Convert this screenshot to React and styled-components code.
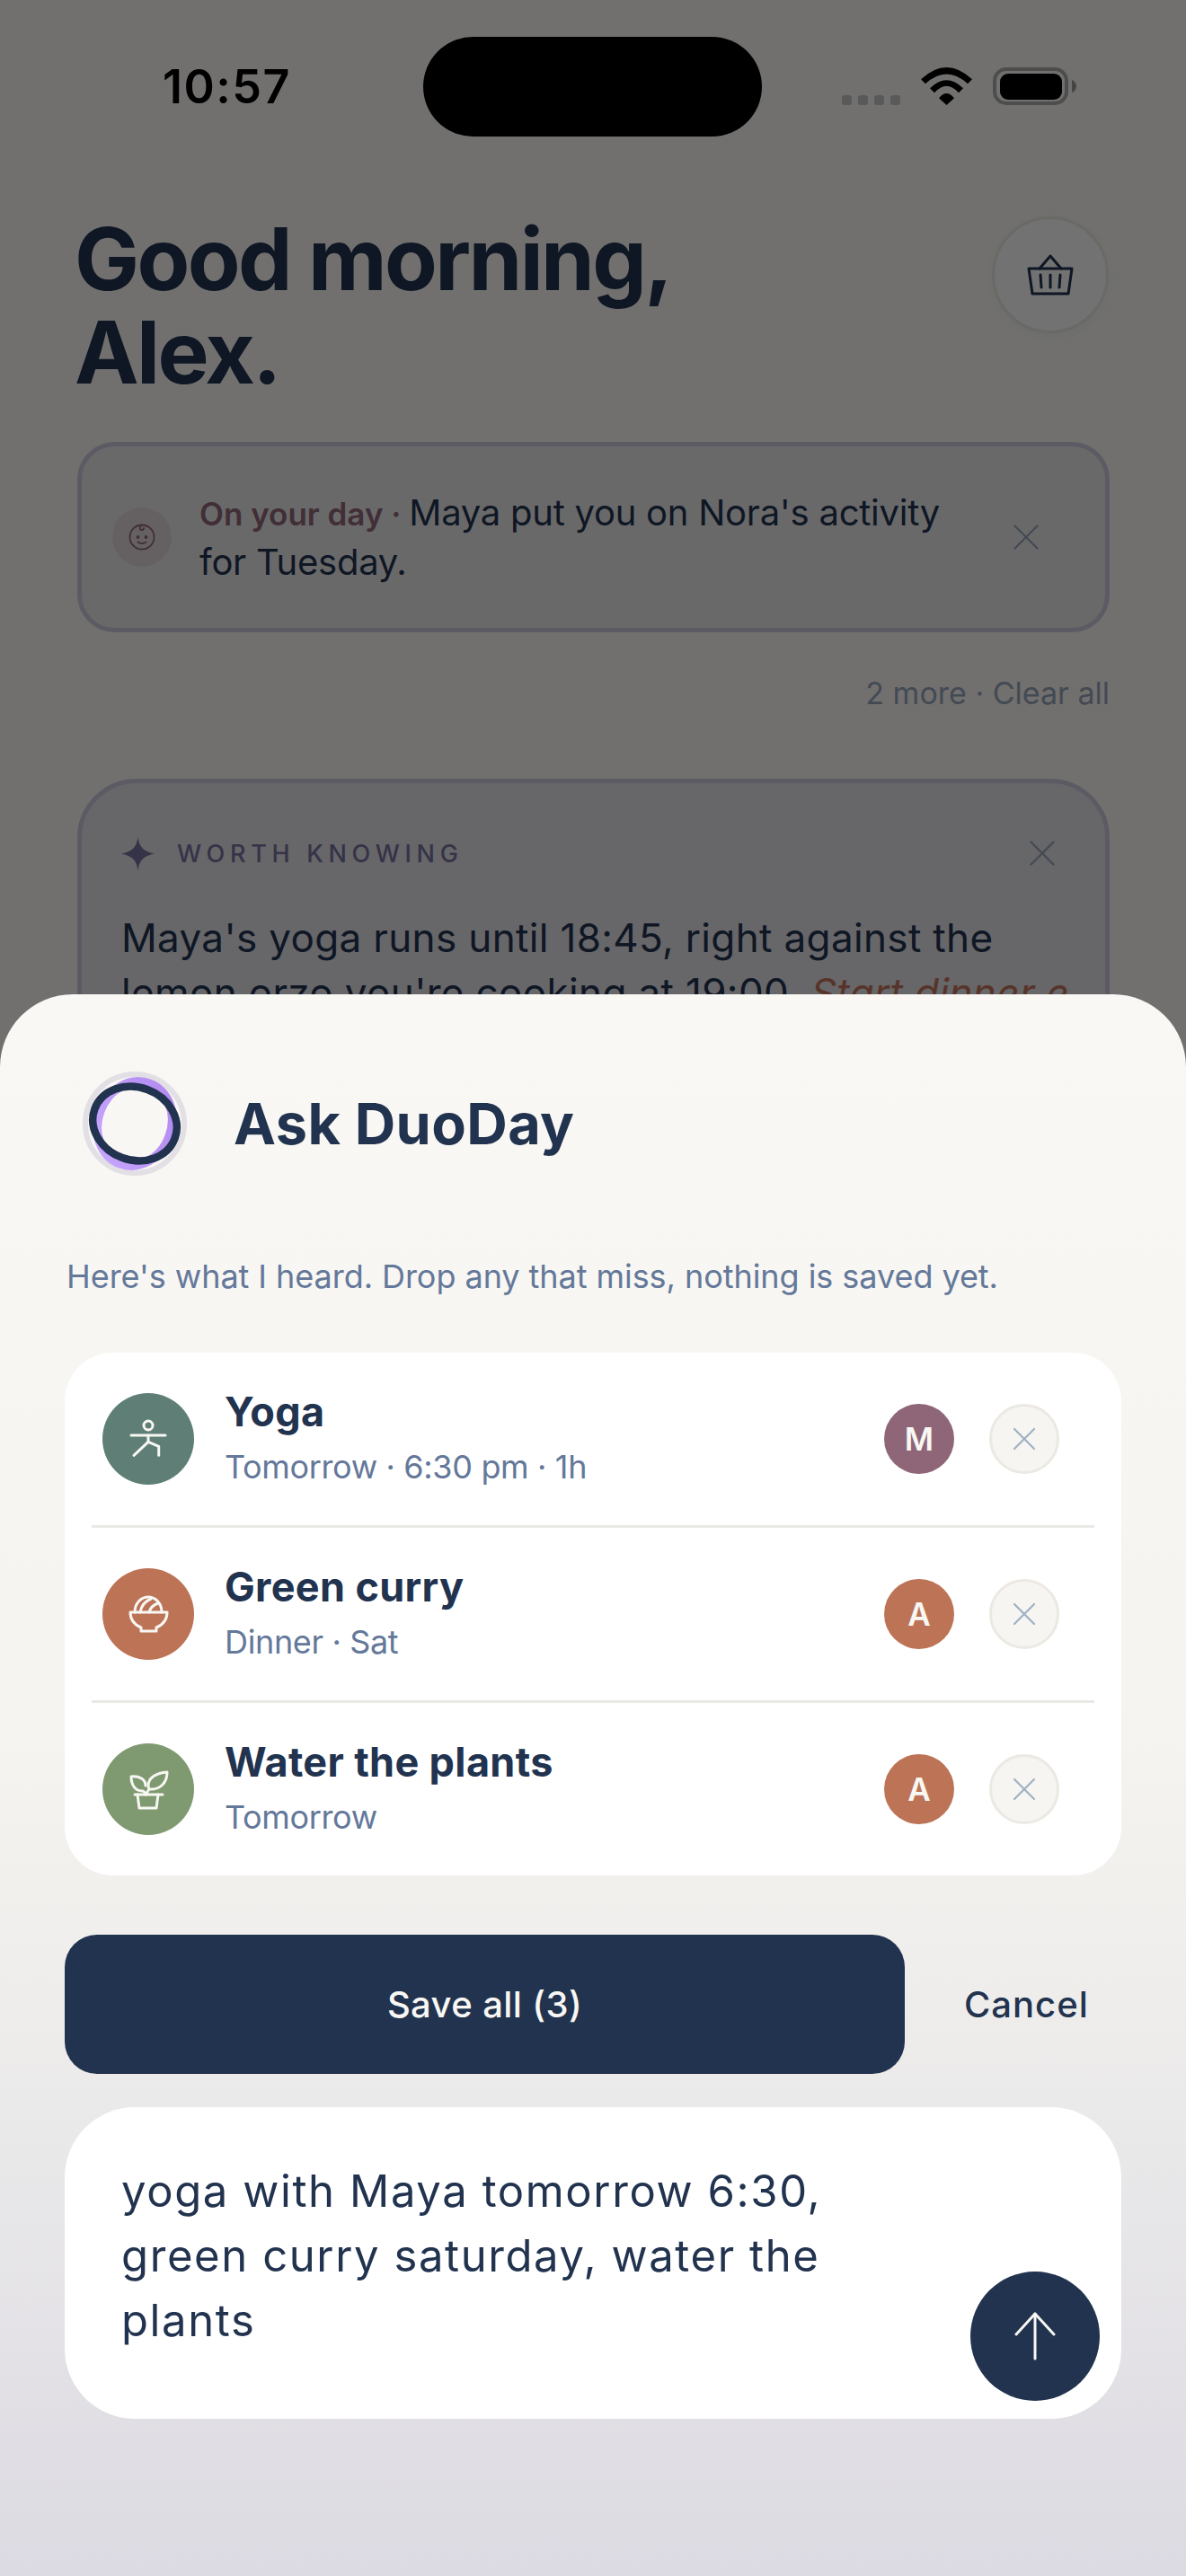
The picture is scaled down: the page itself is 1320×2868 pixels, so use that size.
import React from "react";
import styled, { createGlobalStyle } from "styled-components";
import { X } from "lucide-react";

const FONT = `Inter, "Liberation Sans", sans-serif`;
const NAVY = "#22334f";
const SLATE = "#64789a";
const MUTED = "#94a3b8";

const Global = createGlobalStyle`
  html, body { margin: 0; padding: 0; background: #f8f7f3; }
  * { box-sizing: border-box; }
`;

const Phone = styled.div`
  position: relative;
  width: 1320px;
  height: 2868px;
  overflow: hidden;
  background: #f8f7f3;
  font-family: ${FONT};
`;

const StatusBar = styled.div`
  display: flex;
  align-items: flex-start;
  height: 236px;
  padding-top: 41px;
`;

const Clock = styled.div`
  width: 139px;
  margin: 30px 0 0 181px;
  font-size: 52px;
  line-height: 52px;
  font-weight: 600;
  letter-spacing: 1.5px;
  color: #000;
  white-space: nowrap;
`;

const Island = styled.div`
  width: 377px;
  height: 111px;
  margin-left: 151px;
  border-radius: 56px;
  background: #000;
`;

const StatusIcons = styled.div`
  display: flex;
  align-items: flex-end;
  gap: 23px;
  height: 42px;
  margin: 34px 0 0 89px;
`;

const Dots = styled.div`
  display: flex;
  gap: 7px;
`;

const Dot = styled.span`
  width: 11px;
  height: 11px;
  border-radius: 3px;
  background: #c4c4c4;
`;

const Content = styled.div`
  padding: 0 85px 0 86px;
`;

const Hero = styled.div`
  display: flex;
  justify-content: space-between;
  align-items: flex-start;
`;

const Title = styled.h1`
  margin: 0 0 0 -3px;
  font-size: 96px;
  line-height: 104px;
  font-weight: 700;
  letter-spacing: -2.6px;
  color: ${NAVY};
`;

const Basket = styled.div`
  display: flex;
  align-items: center;
  justify-content: center;
  width: 130px;
  height: 130px;
  margin: 5px 1px 0 0;
  border-radius: 50%;
  border: 3px solid #e8e6e0;
  background: #fafafb;
  box-shadow: 0 3px 12px rgba(34, 51, 79, 0.05);
`;

const Notice = styled.div`
  display: flex;
  align-items: center;
  height: 212px;
  margin-top: 48px;
  padding-left: 34px;
  border: 5px solid #cbc9dc;
  border-radius: 42px;
  background: #e8e6e8;
`;

const NoticeIcon = styled.div`
  display: flex;
  flex: none;
  align-items: center;
  justify-content: center;
  width: 66px;
  height: 66px;
  border-radius: 50%;
  background: #ded6d8;
`;

const NoticeText = styled.div`
  width: 860px;
  margin-left: 31px;
  font-size: 40px;
  line-height: 53px;
  letter-spacing: -0.25px;
  color: ${NAVY};
`;

const Accent = styled.b`
  font-size: 35px;
  font-weight: 600;
  letter-spacing: 0;
  color: #8f6678;
`;

const Dismiss = styled.div`
  display: flex;
  flex: none;
  margin-left: ${(p) => p.$gap}px;
  color: ${MUTED};
`;

const More = styled.div`
  margin-top: 48px;
  text-align: right;
  font-size: 34px;
  line-height: 40px;
  color: ${MUTED};
`;

const Insight = styled.div`
  height: 460px;
  margin-top: 75px;
  padding: 58px 45px 0 44px;
  border: 5px solid #cbc9dc;
  border-radius: 66px;
  background: #e3e1e6;
`;

const InsightHead = styled.div`
  display: flex;
  align-items: center;
  height: 40px;
`;

const Eyebrow = styled.span`
  margin-left: 25px;
  flex: 1;
  font-size: 27px;
  font-weight: 500;
  letter-spacing: 5.7px;
  color: #75709f;
`;

const InsightText = styled.p`
  margin: 44px 0 0;
  font-size: 44px;
  line-height: 61px;
  letter-spacing: 0.35px;
  color: ${NAVY};
  white-space: nowrap;
`;

const Link = styled.em`
  color: #c0735a;
`;

const Scrim = styled.div`
  position: absolute;
  inset: 0;
  background: rgba(0, 0, 0, 0.545);
`;

const Sheet = styled.div`
  position: absolute;
  left: 0;
  right: 0;
  top: 1107px;
  bottom: 0;
  padding: 86px 72px 0;
  border-radius: 81px 81px 0 0;
  background: linear-gradient(180deg, #f9f8f4 0%, #f5f4f0 45%, #efeeec 62%, #dcdae2 100%);
`;

const SheetHead = styled.div`
  display: flex;
  align-items: center;
  padding-left: 20px;
  height: 115px;
`;

const SheetTitle = styled.h2`
  margin: 0 0 0 52px;
  font-size: 63px;
  line-height: 76px;
  font-weight: 700;
  letter-spacing: 0.4px;
  color: ${NAVY};
`;

const Lead = styled.p`
  margin: 91px 0 0 2px;
  font-size: 36px;
  line-height: 44px;
  letter-spacing: -0.05px;
  color: ${SLATE};
`;

const List = styled.div`
  margin-top: 63px;
  padding: 0 30px;
  border-radius: 54px;
  background: #fff;
`;

const Row = styled.div`
  display: flex;
  align-items: center;
  height: ${(p) => (p.$first ? "192px" : "195px")};
  padding: 0 39px 0 12px;
  border-top: ${(p) => (p.$first ? "none" : "3px solid #ebe9e3")};
`;

const RowIcon = styled.div`
  display: flex;
  flex: none;
  align-items: center;
  justify-content: center;
  width: 102px;
  height: 102px;
  border-radius: 50%;
  background: ${(p) => p.$bg};
`;

const RowBody = styled.div`
  flex: 1;
  margin-left: 34px;
  padding-bottom: 5px;
`;

const RowTitle = styled.div`
  font-size: 45px;
  line-height: 56px;
  font-weight: 700;
  letter-spacing: 0.35px;
  color: ${NAVY};
`;

const RowMeta = styled.div`
  margin-top: 11px;
  font-size: 36px;
  line-height: 44px;
  letter-spacing: -0.35px;
  color: ${SLATE};
`;

const Avatar = styled.div`
  display: flex;
  align-items: center;
  justify-content: center;
  width: 78px;
  height: 78px;
  border-radius: 50%;
  background: ${(p) => p.$bg};
  color: #f8f7f3;
  font-size: 35px;
  font-weight: 600;
`;

const Remove = styled.div`
  display: flex;
  align-items: center;
  justify-content: center;
  width: 78px;
  height: 78px;
  margin-left: 39px;
  border: 3px solid #ebe9e2;
  border-radius: 50%;
  background: #f6f5f1;
  color: #9fb0c4;
`;

const Actions = styled.div`
  display: flex;
  align-items: center;
  margin-top: 66px;
`;

const SaveButton = styled.div`
  display: flex;
  align-items: center;
  justify-content: center;
  width: 935px;
  height: 155px;
  border-radius: 36px;
  background: ${NAVY};
  color: #f8f7f3;
  font-size: 40px;
  font-weight: 500;
  letter-spacing: 0.4px;
`;

const CancelButton = styled.div`
  margin-left: 66px;
  font-size: 40px;
  font-weight: 500;
  letter-spacing: 1px;
  color: ${NAVY};
`;

const Composer = styled.div`
  position: relative;
  height: 347px;
  margin-top: 37px;
  padding: 58px 0 0 63px;
  border-radius: 78px;
  background: #fff;
`;

const ComposerText = styled.div`
  width: 800px;
  font-size: 49px;
  line-height: 72px;
  letter-spacing: 1.6px;
  color: ${NAVY};
`;

const Send = styled.div`
  position: absolute;
  right: 24px;
  bottom: 20px;
  display: flex;
  align-items: center;
  justify-content: center;
  width: 144px;
  height: 144px;
  border-radius: 50%;
  background: ${NAVY};
`;

const Wifi = () => (
  <svg width="57" height="42" viewBox="0 0 57 42" fill="#000">
    <path d="M0 13.300Q28.500-13.300 57 13.300L52 18.300Q28.500-3.100 5 18.300Z" />
    <path d="M10 23.300Q28.500 5.300 47 23.300L42 28.300Q28.500 13.100 15 28.300Z" />
    <path d="M20 34.300Q28.500 23.700 37 34.300L28.500 42Z" />
  </svg>
);

const Battery = () => (
  <svg width="93" height="42" viewBox="0 0 93 42">
    <rect x="2" y="2" width="80" height="38" rx="13" fill="none" stroke="#aaaaaa" strokeWidth="4" />
    <rect x="8" y="7" width="69" height="29" rx="9" fill="#000" />
    <path d="M88 14c3 1 5 4 5 7s-2 6-5 7z" fill="#999999" />
  </svg>
);

const BasketIcon = () => (
  <svg width="56" height="56" viewBox="0 0 56 56" fill="none" stroke={NAVY} strokeWidth="3" strokeLinecap="round" strokeLinejoin="round">
    <path d="M4 21h48l-4 28H8z" />
    <path d="M16 21 28 7l12 14" />
    <path d="M17 28l1 14" />
    <path d="M28 28v14" />
    <path d="M39 28l-1 14" />
  </svg>
);

const BabyFace = () => (
  <svg width="32" height="32" viewBox="0 0 32 32" fill="none" stroke="#8f6678" strokeWidth="1.800" strokeLinecap="round">
    <circle cx="16" cy="16" r="13.500" />
    <path d="M16 2.500c-3 2-3 5.500 0 5.500 1.500 0 2-1 2-2" />
    <path d="M11.500 21.500c2.500 2 6.500 2 9 0" />
    <circle cx="11.500" cy="16" r="1" fill="#8f6678" />
    <circle cx="20.500" cy="16" r="1" fill="#8f6678" />
  </svg>
);

const Sparkle = () => (
  <svg width="37" height="37" viewBox="0 0 37 37" fill="#75709f">
    <path d="M18.500 0c1.500 11 6 16 18.500 18.500C24.500 21 20 26 18.500 37 17 26 12.500 21 0 18.500 12.500 16 17 11 18.500 0z" />
  </svg>
);

const DuoLogo = () => (
  <svg width="116" height="116" viewBox="0 0 116 116" fill="none">
    <defs>
      <linearGradient id="duoPurple" x1="0" y1="1" x2="1" y2="0">
        <stop offset="0" stopColor="#c9a8ff" />
        <stop offset="1" stopColor="#b088ee" />
      </linearGradient>
    </defs>
    <circle cx="58" cy="58" r="55" stroke="#e2e0e4" strokeWidth="6" />
    <g transform="rotate(20 58 58)">
      <ellipse cx="58" cy="58" rx="41" ry="47.500" stroke="url(#duoPurple)" strokeWidth="10" />
      <ellipse cx="58" cy="58" rx="47.500" ry="40.500" stroke="#22334f" strokeWidth="8.500" />
    </g>
  </svg>
);

const YogaIcon = () => (
  <svg width="48" height="48" viewBox="0 0 48 48" fill="none" stroke="#f8f7f3" strokeWidth="3" strokeLinecap="round" strokeLinejoin="round">
    <circle cx="24" cy="9" r="5" />
    <path d="M5 20h38" />
    <path d="M24 20v7.300" />
    <path d="M24 27.300 8 42.300" />
    <path d="M24 27.300l11.700 5v10" />
  </svg>
);

const BowlIcon = () => (
  <svg width="48" height="48" viewBox="0 0 48 48" fill="none" stroke="#f8f7f3" strokeWidth="3" strokeLinecap="round" strokeLinejoin="round">
    <path d="M4 22h41c0 8-5 14-12 17v4H16v-4C9 36 4 30 4 22z" />
    <path d="M9 22C9 12 16 5 24 5s15 7 15 17" />
    <path d="M15 22c1-6 5-12 12-15" />
    <path d="M25 22c1-4 4-8 10-10" />
  </svg>
);

const PlantIcon = () => (
  <svg width="48" height="48" viewBox="0 0 48 48" fill="none" stroke="#f8f7f3" strokeWidth="3" strokeLinecap="round" strokeLinejoin="round">
    <path d="M9 30h31" />
    <path d="M12 30l2 15h19l2-15" />
    <path d="M21 30c0-2-1-3-3-4C10 26.500 5 20 5 10c9-1 16 3 16 10" />
    <path d="M22 30c.5-2 1-4 3-6 11 1 20-6 20-19-12 1-21 6-21 15 0 1.500.5 3 1 4" />
  </svg>
);

const SendArrow = () => (
  <svg width="48" height="54" viewBox="0 0 48 54" fill="none" stroke="#f8f7f3" strokeWidth="3" strokeLinecap="round" strokeLinejoin="round">
    <path d="M24 2v50" />
    <path d="M3 25 24 2l21 23" />
  </svg>
);

const items = [
  { title: "Yoga", meta: "Tomorrow · 6:30 pm · 1h", bg: "#5f7f76", Icon: YogaIcon, who: "M", whoBg: "#8f6678" },
  { title: "Green curry", meta: "Dinner · Sat", bg: "#bd7356", Icon: BowlIcon, who: "A", whoBg: "#bd7356" },
  { title: "Water the plants", meta: "Tomorrow", bg: "#7f9a70", Icon: PlantIcon, who: "A", whoBg: "#bd7356" },
];

export default function App() {
  return (
    <Phone>
      <Global />
      <StatusBar>
        <Clock>10:57</Clock>
        <Island />
        <StatusIcons>
          <Dots>
            <Dot />
            <Dot />
            <Dot />
            <Dot />
          </Dots>
          <Wifi />
          <Battery />
        </StatusIcons>
      </StatusBar>
      <Content>
        <Hero>
          <Title>
            Good morning,
            <br />
            Alex.
          </Title>
          <Basket>
            <BasketIcon />
          </Basket>
        </Hero>
        <Notice>
          <NoticeIcon>
            <BabyFace />
          </NoticeIcon>
          <NoticeText>
            <Accent>On your day · </Accent>Maya put you on Nora's activity for Tuesday.
          </NoticeText>
          <Dismiss $gap={35}>
            <X size={50} strokeWidth={1.1} />
          </Dismiss>
        </Notice>
        <More>2 more · Clear all</More>
        <Insight>
          <InsightHead>
            <Sparkle />
            <Eyebrow>WORTH KNOWING</Eyebrow>
            <Dismiss $gap={0}>
              <X size={50} strokeWidth={1.1} />
            </Dismiss>
          </InsightHead>
          <InsightText>
            Maya's yoga runs until 18:45, right against the
            <br />
            lemon orzo you're cooking at 19:00. <Link>Start dinner e</Link>
          </InsightText>
        </Insight>
      </Content>
      <Scrim />
      <Sheet>
        <SheetHead>
          <DuoLogo />
          <SheetTitle>Ask DuoDay</SheetTitle>
        </SheetHead>
        <Lead>Here's what I heard. Drop any that miss, nothing is saved yet.</Lead>
        <List>
          {items.map((item, i) => (
            <Row key={item.title} $first={i === 0}>
              <RowIcon $bg={item.bg}>
                <item.Icon />
              </RowIcon>
              <RowBody>
                <RowTitle>{item.title}</RowTitle>
                <RowMeta>{item.meta}</RowMeta>
              </RowBody>
              <Avatar $bg={item.whoBg}>{item.who}</Avatar>
              <Remove>
                <X size={44} strokeWidth={1.2} />
              </Remove>
            </Row>
          ))}
        </List>
        <Actions>
          <SaveButton>Save all (3)</SaveButton>
          <CancelButton>Cancel</CancelButton>
        </Actions>
        <Composer>
          <ComposerText>yoga with Maya tomorrow 6:30, green curry saturday, water the plants</ComposerText>
          <Send>
            <SendArrow />
          </Send>
        </Composer>
      </Sheet>
    </Phone>
  );
}
